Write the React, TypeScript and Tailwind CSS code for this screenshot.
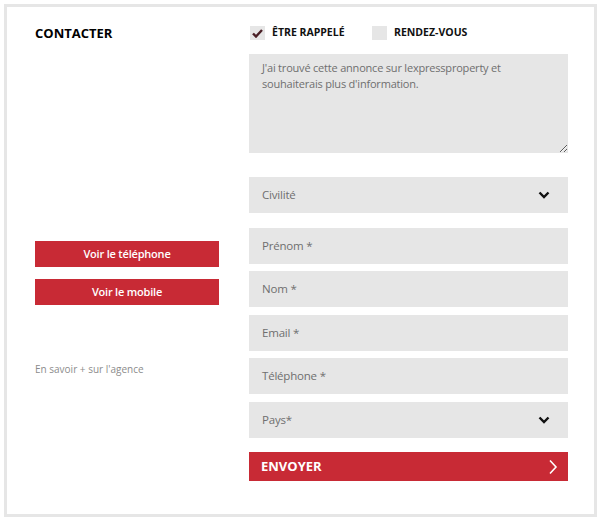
import React from "react";

const font = { fontFamily: '"Open Sans", "Liberation Sans", sans-serif' };

const Chevron = () => (
  <svg width="12" height="8" viewBox="0 0 12 8" className="text-[#111]">
    <path d="M1.5 1.5 L6 6 L10.5 1.5" fill="none" stroke="currentColor" strokeWidth="2.4" />
  </svg>
);

const Field = ({ label, select, className = "" }: { label: string; select?: boolean; className?: string }) => (
  <div className={`flex h-9 items-center justify-between bg-[#e6e6e6] pl-[13px] pr-[18px] ${className}`}>
    <span className="text-[11.5px] tracking-[-0.2px] text-[#6f6f6f]">{label}</span>
    {select && <Chevron />}
  </div>
);

const CheckBox = ({ checked, label, className = "" }: { checked?: boolean; label: string; className?: string }) => (
  <label className={`flex items-center gap-[7px] ${className}`}>
    <span className="flex h-[14px] w-[15px] items-center justify-center bg-[#e6e6e6]">
      {checked && (
        <svg width="11" height="9" viewBox="0 0 11 9">
          <path d="M1 4.5 L4 7.5 L10 1" fill="none" stroke="#4a1f26" strokeWidth="2.4" />
        </svg>
      )}
    </span>
    <span className="text-[10.5px] font-bold text-[#111]">{label}</span>
  </label>
);

export default function App() {
  return (
    <div className="h-[521px] w-[601px] bg-white p-1" style={font}>
      <div className="flex h-[513px] border-[3px] border-[#e6e6e6] pl-[28px] pt-[17px]">
        {/* left column */}
        <div className="flex w-[214px] flex-col">
          <h2 className="text-[13px] font-bold leading-[18px] text-black">CONTACTER</h2>
          <div className="mt-[199px] flex w-[184px] flex-col gap-3">
            <button className="h-[26px] bg-[#c82a35] text-[11px] font-semibold tracking-[-0.2px] text-white">Voir le téléphone</button>
            <button className="h-[26px] bg-[#c82a35] text-[11px] font-semibold tracking-[-0.2px] text-white">Voir le mobile</button>
          </div>
          <a className="mt-[57px] text-[10px] text-[#8c8c8c]">En savoir + sur l'agence</a>
        </div>

        {/* form */}
        <div className="flex w-[319px] flex-col">
          <div className="flex h-[18px] items-center pl-[1px]">
            <CheckBox checked label="ÊTRE RAPPELÉ" className="w-[122px]" />
            <CheckBox label="RENDEZ-VOUS" />
          </div>
          <textarea
            className="mt-[12px] h-[99px] resize-y bg-[#e6e6e6] px-[13px] pt-[6px] text-[11px] leading-[16px] tracking-[-0.2px] text-[#6f6f6f] outline-none"
            defaultValue="J'ai trouvé cette annonce sur lexpressproperty et souhaiterais plus d'information."
          />
          <Field label="Civilité" select className="mt-[24px]" />
          <Field label="Prénom *" className="mt-[15px]" />
          <Field label="Nom *" className="mt-[7px]" />
          <Field label="Email *" className="mt-[8px]" />
          <Field label="Téléphone *" className="mt-[7px]" />
          <Field label="Pays*" select className="mt-[8px]" />
          <button className="mt-[14px] flex h-[29px] items-center justify-between bg-[#c82a35] pl-[12px] pr-[10px] text-white">
            <span className="text-[13px] font-bold">ENVOYER</span>
            <svg width="10" height="16" viewBox="0 0 10 16">
              <path d="M2 1.5 L8 8 L2 14.5" fill="none" stroke="white" strokeWidth="1.6" />
            </svg>
          </button>
        </div>
      </div>
    </div>
  );
}
